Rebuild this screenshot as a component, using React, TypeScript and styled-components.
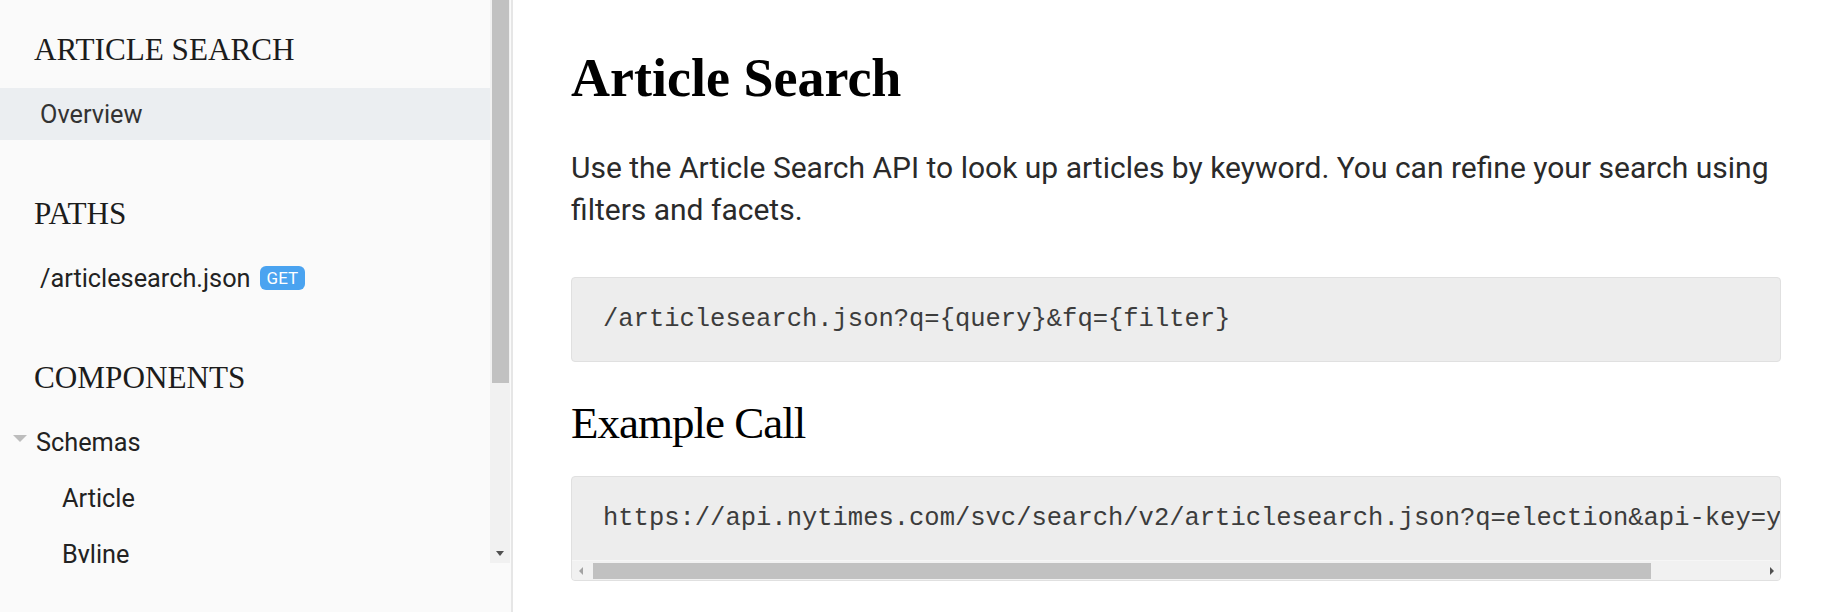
import React from "react";
import styled, { createGlobalStyle } from "styled-components";

const GlobalStyle = createGlobalStyle`
  html, body { margin: 0; padding: 0; height: 100%; overflow: hidden; background: #ffffff; }
  #root { height: 100%; }
  *, *::before, *::after { box-sizing: border-box; }
`;

const Page = styled.div`
  display: flex;
  width: 1828px;
  height: 612px;
`;

/* ---------- Sidebar ---------- */

const Sidebar = styled.aside`
  flex: 0 0 513px;
  display: flex;
  flex-direction: column;
  background: #fafafa;
  border-right: 2px solid #e6e6e6;
`;

const SidebarScroll = styled.div`
  display: flex;
  height: 563px;
`;

const Nav = styled.nav`
  width: 490px;
  overflow: hidden;
  padding-top: 32px;
`;

const NavHeading = styled.h2<{ $first?: boolean }>`
  margin: ${(p) => (p.$first ? "0" : "56px")} 0 20px;
  padding-left: 34px;
  font-family: "Liberation Serif", "Times New Roman", serif;
  font-weight: 400;
  font-size: 31.2px;
  line-height: 36px;
  color: #1c1c1c;
`;

const NavItem = styled.div<{ $active?: boolean; $indent: number; $spaced?: boolean }>`
  display: flex;
  align-items: center;
  height: 52px;
  margin-top: ${(p) => (p.$spaced ? "4px" : "0")};
  padding-left: ${(p) => p.$indent}px;
  background: ${(p) => (p.$active ? "#ebeef1" : "transparent")};
  font-family: Roboto, "Noto Sans", sans-serif;
  font-size: 25.3px;
  color: ${(p) => (p.$active ? "#333333" : "#222222")};
  white-space: nowrap;
`;

const Caret = styled.span`
  width: 0;
  height: 0;
  margin-top: -7px;
  margin-right: 9px;
  border-left: 7px solid transparent;
  border-right: 7px solid transparent;
  border-top: 7px solid #bdbdbd;
`;

const MethodBadge = styled.span`
  display: inline-flex;
  align-items: center;
  justify-content: center;
  height: 24px;
  margin-left: 9px;
  padding: 0 7px;
  border-radius: 6px;
  background: #4aa3f0;
  color: #ffffff;
  font-family: Roboto, "Noto Sans", sans-serif;
  font-size: 17px;
  line-height: 1;
`;

const VScrollbar = styled.div`
  width: 20px;
  margin-right: 1px;
  display: flex;
  flex-direction: column;
  background: #f1f1f1;
`;

const VThumb = styled.div<{ $length: number }>`
  height: ${(p) => p.$length}px;
  margin: 0 1px 0 2px;
  background: #c1c1c1;
`;

const Spacer = styled.div`
  flex: 1;
`;

const VButton = styled.div`
  height: 20px;
  display: flex;
  align-items: center;
  justify-content: center;
`;

const ArrowDown = styled.span`
  width: 0;
  height: 0;
  border-left: 4.5px solid transparent;
  border-right: 4.5px solid transparent;
  border-top: 5px solid #505050;
`;

/* ---------- Main ---------- */

const Main = styled.main`
  flex: 1;
  min-width: 0;
  padding: 47px 47px 0 58px;
  background: #ffffff;
  overflow: hidden;
`;

const Title = styled.h1`
  margin: 0;
  font-family: "Liberation Serif", "Times New Roman", serif;
  font-weight: 700;
  font-size: 54px;
  line-height: 62px;
  color: #000000;
`;

const Lead = styled.p`
  margin: 38px 0 0;
  font-family: Roboto, "Noto Sans", sans-serif;
  font-weight: 400;
  font-size: 30px;
  line-height: 42px;
  color: #2a2a2a;
`;

const SubTitle = styled.h2`
  margin: 34px 0 0;
  font-family: "Liberation Serif", "Times New Roman", serif;
  font-weight: 400;
  font-size: 45px;
  letter-spacing: -1px;
  line-height: 54px;
  color: #000000;
`;

const CodeBlock = styled.div<{ $gap: number }>`
  margin-top: ${(p) => p.$gap}px;
  border: 1px solid #e0e0e0;
  border-radius: 4px;
  background: #ededed;
  overflow: hidden;
`;

const CodePre = styled.pre`
  margin: 0;
  padding: 27px 31px;
  overflow: hidden;
  white-space: pre;
  font-family: "Liberation Mono", "Courier New", monospace;
  font-size: 25.5px;
  line-height: 29px;
  color: #3c3c3c;
`;

const HScrollbar = styled.div`
  display: flex;
  align-items: center;
  height: 20px;
  background: #f1f1f1;
  border-top: 1px solid #f6f6f6;
`;

const HButton = styled.div`
  flex: 0 0 17px;
  height: 100%;
  display: flex;
  align-items: center;
  justify-content: center;
`;

const ArrowSide = styled.span<{ $dir: "left" | "right"; $dim?: boolean }>`
  width: 0;
  height: 0;
  border-top: 4px solid transparent;
  border-bottom: 4px solid transparent;
  ${(p) =>
    p.$dir === "left"
      ? `border-right: 4.5px solid ${p.$dim ? "#a3a3a3" : "#505050"};`
      : `border-left: 4.5px solid ${p.$dim ? "#a3a3a3" : "#505050"};`}
`;

const HTrack = styled.div`
  flex: 1;
  display: flex;
  align-items: center;
  height: 100%;
`;

const HThumb = styled.div<{ $length: number }>`
  width: ${(p) => p.$length}px;
  height: 16px;
  margin-left: 4px;
  background: #c1c1c1;
`;

export default function App() {
  return (
    <>
      <GlobalStyle />
      <Page>
        <Sidebar>
          <SidebarScroll>
            <Nav>
              <NavHeading $first>ARTICLE SEARCH</NavHeading>
              <NavItem $active $indent={40}>Overview</NavItem>

              <NavHeading>PATHS</NavHeading>
              <NavItem $indent={40}>
                /articlesearch.json
                <MethodBadge>GET</MethodBadge>
              </NavItem>

              <NavHeading>COMPONENTS</NavHeading>
              <NavItem $indent={13}>
                <Caret />
                Schemas
              </NavItem>
              <NavItem $indent={62} $spaced>Article</NavItem>
              <NavItem $indent={62} $spaced>Byline</NavItem>
              <NavItem $indent={62} $spaced>Headline</NavItem>
            </Nav>
            <VScrollbar>
              <VThumb $length={383} />
              <Spacer />
              <VButton>
                <ArrowDown />
              </VButton>
            </VScrollbar>
          </SidebarScroll>
        </Sidebar>

        <Main>
          <Title>Article Search</Title>
          <Lead>
            Use the Article Search API to look up articles by keyword. You can refine your search using
            filters and facets.
          </Lead>
          <CodeBlock $gap={46}>
            <CodePre>{"/articlesearch.json?q={query}&fq={filter}"}</CodePre>
          </CodeBlock>
          <SubTitle>Example Call</SubTitle>
          <CodeBlock $gap={26}>
            <CodePre>{"https://api.nytimes.com/svc/search/v2/articlesearch.json?q=election&api-key=yourkey"}</CodePre>
            <HScrollbar>
              <HButton>
                <ArrowSide $dir="left" $dim />
              </HButton>
              <HTrack>
                <HThumb $length={1058} />
              </HTrack>
              <HButton>
                <ArrowSide $dir="right" />
              </HButton>
            </HScrollbar>
          </CodeBlock>
        </Main>
      </Page>
    </>
  );
}
